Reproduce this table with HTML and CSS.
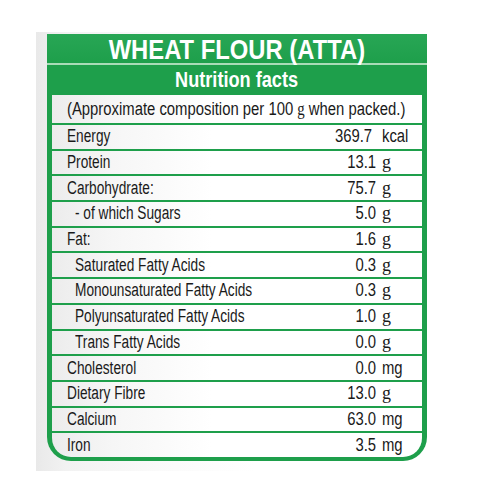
FILE: index.html
```html
<!DOCTYPE html>
<html lang="en">
<head>
    <meta charset="UTF-8">
    <meta name="viewport" content="width=device-width, initial-scale=1.0">
    <title>Wheat Flour (Atta) - Nutrition facts</title>
    <link rel="stylesheet" href="styles.css">
</head>
<body>
    <div class="backing">
        <div class="label">
            <h1 class="title"><span class="narrow">WHEAT FLOUR (ATTA)</span></h1>
            <h2 class="subtitle"><span class="narrow">Nutrition facts</span></h2>

            <div class="facts">
                <div class="row note"><span class="name">(Approximate composition per 100 <span class="g">g</span> when packed.)</span></div>

                <div class="row">
                    <span class="name">Energy</span>
                    <span class="amt"><span class="num kcal">369.7</span><span class="unit"><span class="sans">kcal</span></span></span>
                </div>
                <div class="row">
                    <span class="name">Protein</span>
                    <span class="amt"><span class="num">13.1</span><span class="unit g">g</span></span>
                </div>
                <div class="row">
                    <span class="name">Carbohydrate:</span>
                    <span class="amt"><span class="num">75.7</span><span class="unit g">g</span></span>
                </div>
                <div class="row">
                    <span class="name sub">- of which Sugars</span>
                    <span class="amt"><span class="num">5.0</span><span class="unit g">g</span></span>
                </div>
                <div class="row">
                    <span class="name">Fat:</span>
                    <span class="amt"><span class="num">1.6</span><span class="unit g">g</span></span>
                </div>
                <div class="row">
                    <span class="name sub">Saturated Fatty Acids</span>
                    <span class="amt"><span class="num">0.3</span><span class="unit g">g</span></span>
                </div>
                <div class="row">
                    <span class="name sub">Monounsaturated Fatty Acids</span>
                    <span class="amt"><span class="num">0.3</span><span class="unit g">g</span></span>
                </div>
                <div class="row">
                    <span class="name sub">Polyunsaturated Fatty Acids</span>
                    <span class="amt"><span class="num">1.0</span><span class="unit g">g</span></span>
                </div>
                <div class="row">
                    <span class="name sub">Trans Fatty Acids</span>
                    <span class="amt"><span class="num">0.0</span><span class="unit g">g</span></span>
                </div>
                <div class="row">
                    <span class="name">Cholesterol</span>
                    <span class="amt"><span class="num">0.0</span><span class="unit"><span class="sans">mg</span></span></span>
                </div>
                <div class="row">
                    <span class="name">Dietary Fibre</span>
                    <span class="amt"><span class="num">13.0</span><span class="unit g">g</span></span>
                </div>
                <div class="row">
                    <span class="name">Calcium</span>
                    <span class="amt"><span class="num">63.0</span><span class="unit"><span class="sans">mg</span></span></span>
                </div>
                <div class="row">
                    <span class="name">Iron</span>
                    <span class="amt"><span class="num">3.5</span><span class="unit"><span class="sans">mg</span></span></span>
                </div>
            </div>
        </div>
    </div>
</body>
</html>
```

FILE: styles.css
```css
* {
    box-sizing: border-box;
    margin: 0;
    padding: 0;
}

body {
    background: #fff;
    font-family: "Liberation Sans", Arial, sans-serif;
    color: #1a1a1a;
}

/* no narrow face is installed, so the label text is squeezed by hand */
.narrow,
.name,
.num,
.sans {
    display: inline-block;
    white-space: nowrap;
    transform: scaleX(0.825);
}

.backing {
    margin: 32px 0 0 36px;
    width: 400px;
    padding: 2px 0 10px 11px;
    background: linear-gradient(to right, #e9e9e9 0, #f2f2f2 30px, #fafafa 120px, #fff 220px);
}

.label {
    width: 380px;
    background: #1e9f4b;
    padding: 0 5px 4px 5px;
    border-radius: 0 0 24px 24px;
}

.title {
    height: 31px;
    margin: 0 -5px;
    border-bottom: 2px solid #a9dbb7;
    color: #fff;
    font-size: 28px;
    font-weight: bold;
    line-height: 32px;
    text-align: center;
    background: linear-gradient(#28a655, #1e9f4b);
}

.title .narrow {
    transform: scaleX(0.85);
}

.subtitle {
    height: 30px;
    color: #fff;
    font-size: 22px;
    font-weight: bold;
    line-height: 30px;
    text-align: center;
}

.facts {
    background: linear-gradient(to right, #ececec 0, #f6f6f6 60px, #fff 160px);
    border-radius: 0 0 19px 19px;
    overflow: hidden;
}

.row {
    display: flex;
    justify-content: space-between;
    align-items: center;
    height: 25.7px;
    border-top: 2px solid #1e9f4b;
    padding: 0 17px 0 15px;
    font-size: 18px;
}

.row.note {
    height: 28px;
    border-top: none;
    justify-content: flex-start;
}

.name {
    transform-origin: left center;
}

.row .name {
    transform: scaleX(0.76);
}

.row.note .name {
    transform: scaleX(0.825);
}

.name.sub {
    margin-left: 8px;
}

.amt {
    display: flex;
    align-items: baseline;
}

.num {
    text-align: right;
    transform-origin: right center;
}

.num.kcal {
    margin-right: 4px;
}

.unit {
    width: 23px;
    margin-left: 6px;
}

.sans {
    transform-origin: left center;
}

.g {
    font-family: "Liberation Serif", serif;
    font-size: 18px;
}
```
